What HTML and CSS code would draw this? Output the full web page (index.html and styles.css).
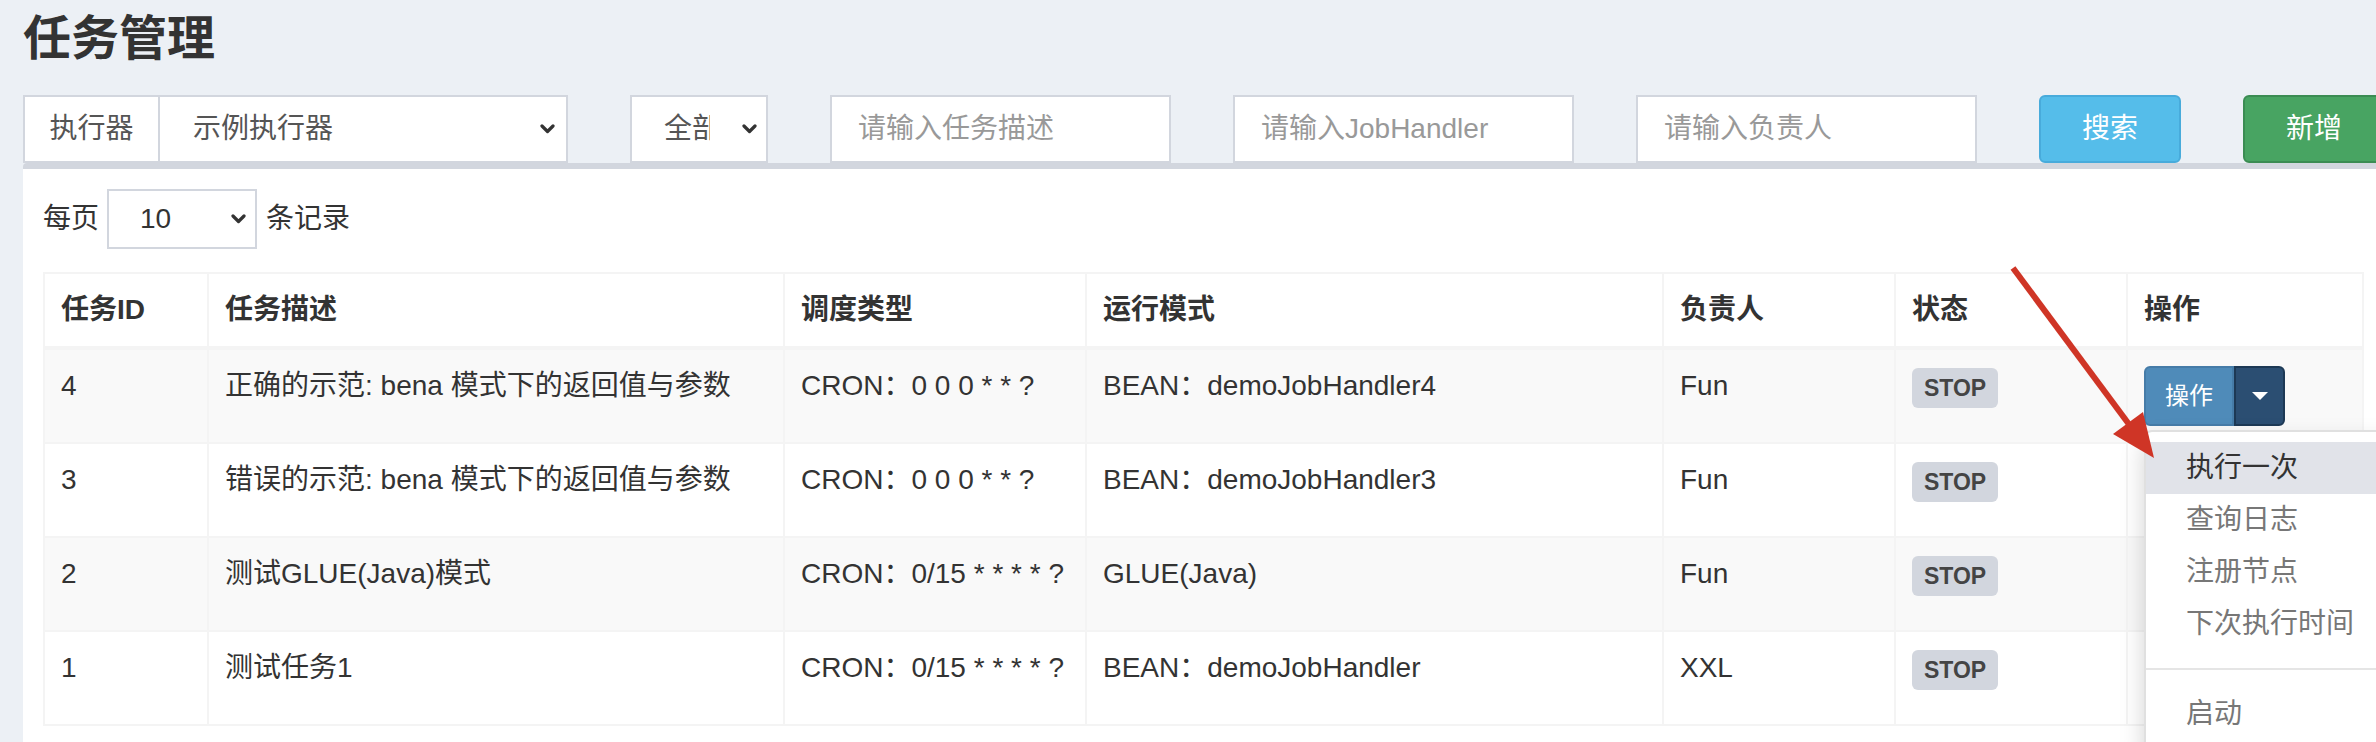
FILE: index.html
```html
<!DOCTYPE html>
<html lang="zh-CN">
<head>
<meta charset="utf-8">
<title>任务管理</title>
<link rel="stylesheet" href="styles.css">
</head>
<body>
<div class="page">
  <h1 class="title">任务管理</h1>
  <div class="filters">
    <div class="group">
      <span class="addon">执行器</span>
      <div class="select select-main"><span class="sel-text">示例执行器</span><svg class="chev" width="15" height="10" viewBox="0 0 15 10"><polyline points="2,2 7.5,7.5 13,2"/></svg></div>
    </div>
    <div class="select select-status"><span class="sel-text clip">全部</span><svg class="chev" width="15" height="10" viewBox="0 0 15 10"><polyline points="2,2 7.5,7.5 13,2"/></svg></div>
    <input class="field" type="text" placeholder="请输入任务描述">
    <input class="field" type="text" placeholder="请输入JobHandler">
    <input class="field" type="text" placeholder="请输入负责人">
    <button class="btn btn-search" type="button">搜索</button>
    <button class="btn btn-add" type="button">新增</button>
  </div>
  <div class="box">
    <div class="length">
      <span>每页</span>
      <div class="select select-len"><span class="sel-text">10</span><svg class="chev" width="15" height="10" viewBox="0 0 15 10"><polyline points="2,2 7.5,7.5 13,2"/></svg></div>
      <span>条记录</span>
    </div>
    <table class="grid">
      <colgroup>
        <col class="c-id"><col class="c-desc"><col class="c-type"><col class="c-mode"><col class="c-owner"><col class="c-status"><col class="c-op">
      </colgroup>
      <thead>
        <tr><th>任务ID</th><th>任务描述</th><th>调度类型</th><th>运行模式</th><th>负责人</th><th>状态</th><th>操作</th></tr>
      </thead>
      <tbody>
        <tr>
          <td>4</td><td>正确的示范: bena 模式下的返回值与参数</td><td>CRON：0 0 0 * * ?</td><td>BEAN：demoJobHandler4</td><td>Fun</td><td><span class="badge">STOP</span></td>
          <td>
            <div class="btn-group">
              <span class="btn-op">操作</span><span class="btn-caret"><span class="caret"></span></span>
              <ul class="menu">
                <li class="active">执行一次</li>
                <li>查询日志</li>
                <li>注册节点</li>
                <li>下次执行时间</li>
                <li class="divider"></li>
                <li>启动</li>
              </ul>
            </div>
          </td>
        </tr>
        <tr>
          <td>3</td><td>错误的示范: bena 模式下的返回值与参数</td><td>CRON：0 0 0 * * ?</td><td>BEAN：demoJobHandler3</td><td>Fun</td><td><span class="badge">STOP</span></td>
          <td><div class="op-slot"></div></td>
        </tr>
        <tr>
          <td>2</td><td>测试GLUE(Java)模式</td><td>CRON：0/15 * * * * ?</td><td>GLUE(Java)</td><td>Fun</td><td><span class="badge">STOP</span></td>
          <td><div class="op-slot"></div></td>
        </tr>
        <tr>
          <td>1</td><td>测试任务1</td><td>CRON：0/15 * * * * ?</td><td>BEAN：demoJobHandler</td><td>XXL</td><td><span class="badge">STOP</span></td>
          <td><div class="op-slot"></div></td>
        </tr>
      </tbody>
    </table>
  </div>
</div>
<svg class="annot" width="2376" height="742" viewBox="0 0 2376 742">
  <line x1="2013" y1="268" x2="2131" y2="427" class="shaft"/>
  <polygon points="2154,458 2113,434 2143,412" class="head"/>
</svg>
</body>
</html>
```

FILE: styles.css
```css
* {
  box-sizing: border-box;
}

html, body {
  margin: 0;
  padding: 0;
  overflow: hidden;
}

body {
  width: 2376px;
  height: 742px;
  position: relative;
  background: #ecf0f5;
  font-family: "Liberation Sans", "Noto Sans CJK SC", sans-serif;
  font-size: 28px;
  line-height: 40px;
  color: #333;
}

.page {
  width: 2382px;
  padding: 12px 0 0 23px;
}

.title {
  margin: 0;
  font-size: 48px;
  line-height: 53px;
  font-weight: 600;
  color: #333;
}

/* ---------- filter bar ---------- */
.filters {
  display: flex;
  gap: 62px;
  height: 68px;
  margin-top: 30px;
}

.group {
  display: flex;
  width: 545px;
  flex: none;
}

.addon {
  display: flex;
  align-items: center;
  justify-content: center;
  width: 135px;
  background: #fff;
  border: 2px solid #d2d6de;
  border-right: 0;
  color: #555;
}

.select {
  display: flex;
  align-items: center;
  justify-content: space-between;
  background: #fff;
  border: 2px solid #d2d6de;
  color: #555;
  flex: none;
}

.select-main {
  flex: 1;
  padding: 0 11px 0 33px;
}

.select-status {
  width: 138px;
  padding: 0 9px 0 32px;
}

.sel-text {
  white-space: nowrap;
}

.clip {
  width: 46px;
  overflow: hidden;
}

.chev {
  flex: none;
}

.chev polyline {
  fill: none;
  stroke: #333;
  stroke-width: 3.2;
  stroke-linecap: round;
  stroke-linejoin: round;
}

.field {
  width: 341px;
  flex: none;
  height: 68px;
  margin: 0;
  padding: 0 26px;
  border: 2px solid #d2d6de;
  background: #fff;
  font: inherit;
  color: #555;
  outline: none;
}

.field::placeholder {
  color: #999;
}

.btn {
  width: 142px;
  flex: none;
  height: 68px;
  margin: 0;
  padding: 0;
  border-radius: 6px;
  font: inherit;
  color: #fff;
}

.btn-search {
  background: #55bdea;
  border: 2px solid #48abdb;
}

.btn-add {
  background: #48a462;
  border: 2px solid #3b8c53;
}

/* ---------- box ---------- */
.box {
  width: 2359px;
  min-height: 600px;
  background: #fff;
  border-top: 6px solid #d2d6de;
  border-radius: 4px 4px 0 0;
  padding: 20px;
}

.length {
  display: flex;
  align-items: center;
  height: 60px;
  color: #333;
}

.select-len {
  width: 150px;
  height: 60px;
  margin: 0 9px 0 8px;
  padding: 0 9px 0 31px;
  color: #333;
}

/* ---------- table ---------- */
.grid {
  margin-top: 23px;
  width: 2319px;
  table-layout: fixed;
  border-collapse: collapse;
  border: 2px solid #f4f4f4;
}

.c-id { width: 164px; }
.c-desc { width: 576px; }
.c-type { width: 302px; }
.c-mode { width: 577px; }
.c-owner { width: 232px; }
.c-status { width: 232px; }
.c-op { width: 236px; }

.grid th,
.grid td {
  padding: 16px;
  border: 2px solid #f4f4f4;
  text-align: left;
  vertical-align: top;
  line-height: 40px;
  white-space: nowrap;
}

.grid th {
  font-weight: bold;
  border-bottom-width: 4px;
}

.grid tbody tr:nth-child(odd) td {
  background: #f9f9f9;
}

.badge {
  display: inline-block;
  height: 40px;
  padding: 0 12px;
  margin-top: 2px;
  line-height: 40px;
  font-size: 23px;
  font-weight: bold;
  color: #444;
  background: #d2d6de;
  border-radius: 6px;
  vertical-align: top;
}

/* ---------- operation button + dropdown ---------- */
.op-slot {
  height: 60px;
}

.btn-group {
  position: relative;
  display: flex;
  width: max-content;
  height: 60px;
}

.btn-op {
  display: flex;
  align-items: center;
  justify-content: center;
  width: 90px;
  height: 60px;
  font-size: 24px;
  color: #fff;
  background: #4f8bb9;
  border: 2px solid #467ca8;
  border-radius: 6px 0 0 6px;
}

.btn-caret {
  display: flex;
  align-items: center;
  justify-content: center;
  width: 51px;
  height: 60px;
  background: #2b4e72;
  border: 2px solid #1d3955;
  border-radius: 0 6px 6px 0;
}

.caret {
  width: 0;
  height: 0;
  border-top: 8px solid #fff;
  border-left: 8px solid transparent;
  border-right: 8px solid transparent;
}

.menu {
  position: absolute;
  z-index: 1000;
  top: calc(100% + 4px);
  left: 0;
  min-width: 320px;
  margin: 0;
  padding: 10px 0;
  list-style: none;
  background: #fff;
  border: 2px solid rgba(0, 0, 0, 0.12);
  border-radius: 8px;
  box-shadow: 0 12px 24px rgba(0, 0, 0, 0.175);
  font-size: 28px;
  line-height: 40px;
}

.menu li {
  padding: 6px 40px;
  color: #777;
  white-space: nowrap;
}

.menu li.active {
  background: #e1e3e9;
  color: #333;
}

.menu li.divider {
  height: 2px;
  padding: 0;
  margin: 18px 0;
  background: #e5e5e5;
}

/* ---------- annotation arrow ---------- */
.annot {
  position: absolute;
  top: 0;
  left: 0;
  z-index: 2000;
  pointer-events: none;
}

.shaft {
  stroke: #cf3526;
  stroke-width: 6;
}

.head {
  fill: #cf3526;
}
```
